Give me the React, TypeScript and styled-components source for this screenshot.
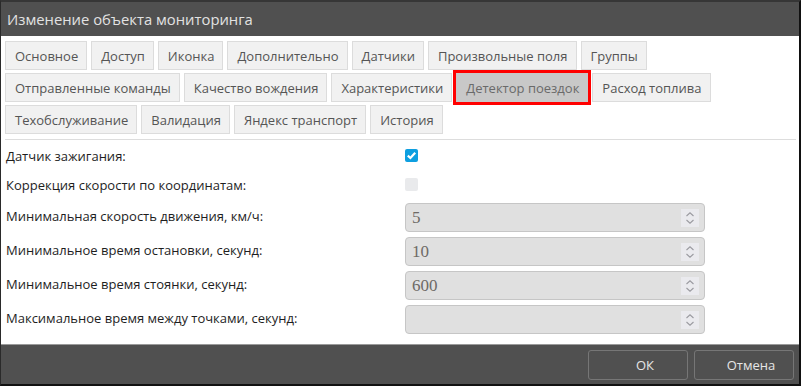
import styled, { createGlobalStyle } from "styled-components";

const GlobalStyle = createGlobalStyle`
  * {
    box-sizing: border-box;
  }
  body {
    margin: 0;
    background: #333;
    font-family: "Open Sans", "Liberation Sans", sans-serif;
  }
`;

const Window = styled.div`
  width: 801px;
  height: 386px;
  display: flex;
  flex-direction: column;
  background: #fff;
  border-top: 2px solid #363636;
  border-left: 1px solid #2a2a2a;
  border-right: 2px solid #111;
  border-bottom: 2px solid #111;
`;

const TitleBar = styled.div`
  height: 34px;
  flex: none;
  display: flex;
  align-items: center;
  padding-left: 6px;
  background: #505050;
  color: #e2e2e2;
  font-size: 14.8px;
`;

const Content = styled.div`
  flex: 1;
  padding: 5px 4px 0 4px;
  display: flex;
  flex-direction: column;
`;

const TabRows = styled.div`
  display: flex;
  flex-direction: column;
  gap: 3px;
`;

const TabRow = styled.div`
  display: flex;
  gap: 4px;
`;

const Tab = styled.div<{ $active?: boolean }>`
  height: 29px;
  padding: 0 8px 0 9px;
  display: flex;
  align-items: center;
  font-size: 13px;
  white-space: nowrap;
  color: ${(p) => (p.$active ? "#6a6a6a" : "#555")};
  background: ${(p) => (p.$active ? "#c8c8c8" : "#f1f1f1")};
  border: 1px solid ${(p) => (p.$active ? "#c8c8c8" : "#dcdcdc")};
  outline: ${(p) => (p.$active ? "3px solid #f00" : "none")};
`;

const Divider = styled.div`
  height: 1px;
  background: #dddddd;
  margin: 5px 0 0 0;
  width: 791px;
`;

const Form = styled.div`
  display: flex;
  flex-direction: column;
  gap: 5px;
  padding-top: 3px;
`;

const Row = styled.div<{ $tall?: boolean; $spaced?: boolean }>`
  display: grid;
  grid-template-columns: 400px 300px;
  align-items: center;
  height: ${(p) => (p.$tall ? "29px" : "24px")};
  margin-top: ${(p) => (p.$spaced ? "2px" : "0")};
`;

const Label = styled.div<{ $lift?: boolean }>`
  font-size: 13px;
  color: #1e1e1e;
  padding-left: 1px;
  margin-top: ${(p) => (p.$lift ? "-4px" : "2px")};
`;

const Check = styled.div<{ $checked?: boolean }>`
  width: 13px;
  height: 13px;
  border-radius: 2px;
  background: ${(p) => (p.$checked ? "#0e9fe0" : "#e9eaec")};
  display: flex;
  align-items: center;
  justify-content: center;
`;

const NumberBox = styled.div`
  height: 29px;
  width: 300px;
  display: flex;
  align-items: center;
  justify-content: space-between;
  padding: 0 5px 0 6px;
  background: #e0e0e0;
  border: 1px solid #c6c6c6;
  border-radius: 4px;
  font-family: "Liberation Serif", "Times New Roman", serif;
  font-size: 17px;
  color: #6e6a66;
`;

const Spinner = styled.div`
  width: 18px;
  height: 18px;
  background: #eaeaee;
  display: flex;
  align-items: center;
  justify-content: center;
`;

const Footer = styled.div`
  height: 40px;
  flex: none;
  background: #505050;
  border-top: 1px solid #9a9a9a;
  display: flex;
  align-items: center;
  justify-content: flex-end;
  gap: 6px;
  padding-right: 5px;
`;

const Button = styled.div`
  width: 100px;
  height: 30px;
  border: 1px solid #767676;
  border-radius: 3px;
  display: flex;
  align-items: center;
  justify-content: center;
  color: #e6e6e6;
  font-size: 13px;
  padding-left: 14px;
`;

const tabRows: string[][] = [
  ["Основное", "Доступ", "Иконка", "Дополнительно", "Датчики", "Произвольные поля", "Группы"],
  ["Отправленные команды", "Качество вождения", "Характеристики", "Детектор поездок", "Расход топлива"],
  ["Техобслуживание", "Валидация", "Яндекс транспорт", "История"],
];

const checks = [
  { label: "Датчик зажигания:", checked: true },
  { label: "Коррекция скорости по координатам:", checked: false },
];

const fields = [
  { label: "Минимальная скорость движения, км/ч:", value: "5" },
  { label: "Минимальное время остановки, секунд:", value: "10" },
  { label: "Минимальное время стоянки, секунд:", value: "600" },
  { label: "Максимальное время между точками, секунд:", value: "" },
];

const SpinIcon = () => (
  <svg width="12" height="14" viewBox="0 0 12 14" fill="none" stroke="#9a9aa0" strokeWidth="1.1">
    <polyline points="2.5,5 6,1.8 9.5,5" />
    <polyline points="2.5,9 6,12.2 9.5,9" />
  </svg>
);

const CheckMark = () => (
  <svg width="11" height="11" viewBox="0 0 11 11" fill="none" stroke="#fff" strokeWidth="2.2">
    <polyline points="1.8,5.6 4.4,8 9.2,2.8" />
  </svg>
);

const App = () => {
  return (
    <>
      <GlobalStyle />
      <Window>
        <TitleBar>Изменение объекта мониторинга</TitleBar>
        <Content>
          <TabRows>
            {tabRows.map((row, i) => (
              <TabRow key={i}>
                {row.map((t) => (
                  <Tab key={t} $active={t === "Детектор поездок"}>
                    {t}
                  </Tab>
                ))}
              </TabRow>
            ))}
          </TabRows>
          <Divider />
          <Form>
            {checks.map((c) => (
              <Row key={c.label}>
                <Label>{c.label}</Label>
                <Check $checked={c.checked}>{c.checked && <CheckMark />}</Check>
              </Row>
            ))}
            {fields.map((f, i) => (
              <Row key={f.label} $tall $spaced={i === 0}>
                <Label $lift>{f.label}</Label>
                <NumberBox>
                  <span>{f.value}</span>
                  <Spinner>
                    <SpinIcon />
                  </Spinner>
                </NumberBox>
              </Row>
            ))}
          </Form>
        </Content>
        <Footer>
          <Button>ОК</Button>
          <Button>Отмена</Button>
        </Footer>
      </Window>
    </>
  );
};

export default App;
